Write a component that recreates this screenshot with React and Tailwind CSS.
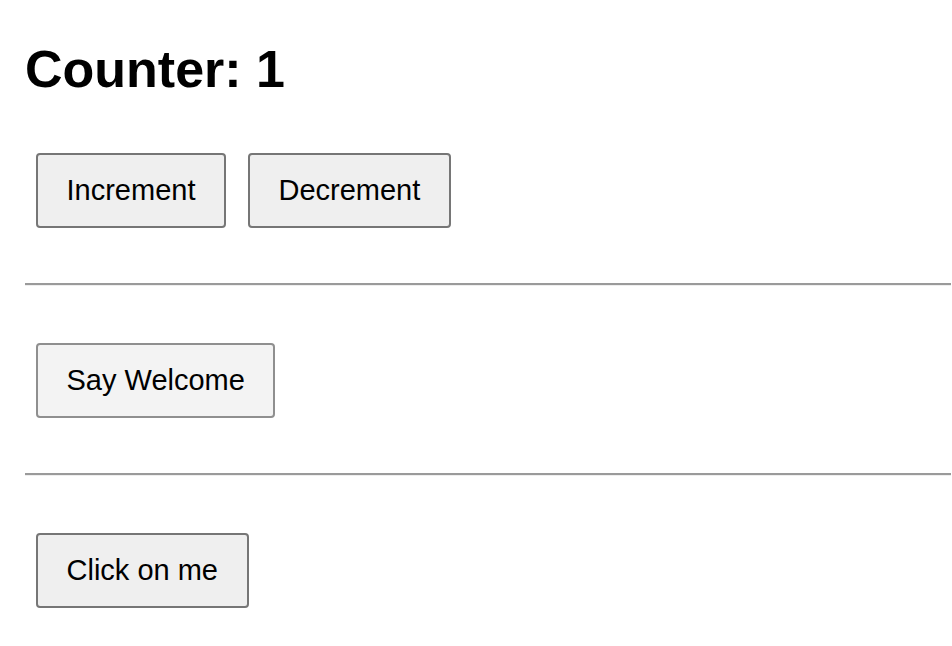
import { useState } from 'react';

const btn =
  'h-[75px] px-[28.5px] text-[29px] leading-[33px] text-black border-2 rounded-[4px] font-["Liberation_Sans",Arial,sans-serif]';

export default function App() {
  const [count, setCount] = useState(1);

  return (
    <div className="min-h-screen bg-white pl-[25px] pr-px pt-[39px] font-['Liberation_Sans',Arial,sans-serif] text-black">
      <h1 className="text-[52px] leading-[60px] font-bold">Counter: {count}</h1>

      <div className="flex gap-[22px] ml-[11px] mt-[54px]">
        <button onClick={() => setCount((c) => c + 1)} className={`${btn} bg-[#efefef] border-[#767676]`}>
          Increment
        </button>
        <button onClick={() => setCount((c) => c - 1)} className={`${btn} bg-[#efefef] border-[#767676]`}>
          Decrement
        </button>
      </div>

      <hr className="mt-[55px] border-0 border-t-2 border-t-[#9a9a9a] border-b border-b-[#eeeeee]" />

      <div className="ml-[11px] mt-[57px]">
        <button onClick={() => alert('Welcome')} className={`${btn} bg-[#f3f3f3] border-[#8f8f8f]`}>
          Say Welcome
        </button>
      </div>

      <hr className="mt-[55px] border-0 border-t-2 border-t-[#9a9a9a] border-b border-b-[#eeeeee]" />

      <div className="ml-[11px] mt-[57px]">
        <button className={`${btn} bg-[#efefef] border-[#767676]`}>Click on me</button>
      </div>
    </div>
  );
}
